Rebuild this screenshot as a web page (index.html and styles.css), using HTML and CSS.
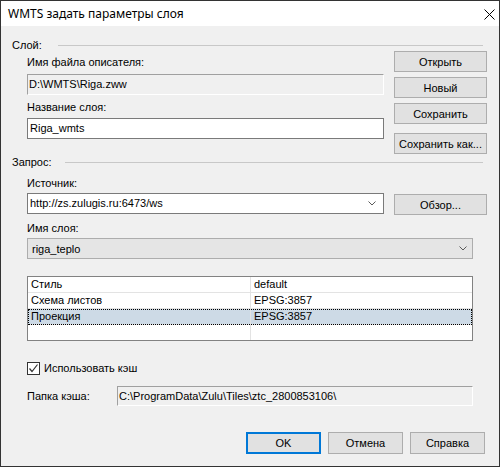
FILE: index.html
```html
<!DOCTYPE html>
<html lang="ru">
<head>
<meta charset="utf-8">
<title>WMTS задать параметры слоя</title>
<link rel="stylesheet" href="styles.css">
</head>
<body>
<div class="window">
  <div class="titlebar">
    <span class="title">WMTS задать параметры слоя</span>
    <svg class="close" viewBox="0 0 11 11" width="11" height="11"><path d="M0.5 0.5 L10.5 10.5 M10.5 0.5 L0.5 10.5" stroke="#000" stroke-width="1" fill="none"/></svg>
  </div>
  <div class="content">
    <div class="group-title"><span>Слой:</span><div class="rule"></div></div>
    <div class="row row-layer">
      <div class="col-left">
        <div class="label l-file">Имя файла описателя:</div>
        <div class="field static f-file">D:\WMTS\Riga.zww</div>
        <div class="label l-name">Название слоя:</div>
        <div class="field edit f-name">Riga_wmts</div>
      </div>
      <div class="col-right">
        <button class="btn">Открыть</button>
        <button class="btn b-gap">Новый</button>
        <button class="btn b-gap">Сохранить</button>
        <button class="btn b-saveas">Сохранить как...</button>
      </div>
    </div>
    <div class="group-title g-query"><span>Запрос:</span><div class="rule"></div></div>
    <div class="row row-source">
      <div class="col-left">
        <div class="label l-source">Источник:</div>
        <div class="field edit combo f-source"><span>http://zs.zulugis.ru:6473/ws</span><svg class="arrow" viewBox="0 0 8 5" width="8" height="5"><path d="M0.5 0.5 L4 4 L7.5 0.5" stroke="#5a5a5a" fill="none"/></svg></div>
      </div>
      <div class="col-right">
        <button class="btn b-browse">Обзор...</button>
      </div>
    </div>
    <div class="label l-layer">Имя слоя:</div>
    <div class="dropdown"><span>riga_teplo</span><svg class="arrow" viewBox="0 0 8 5" width="8" height="5"><path d="M0.5 0.5 L4 4 L7.5 0.5" stroke="#5a5a5a" fill="none"/></svg></div>
    <div class="props">
      <div class="prow"><div class="pcell pkey">Стиль</div><div class="pcell">default</div></div>
      <div class="prow"><div class="pcell pkey">Схема листов</div><div class="pcell">EPSG:3857</div></div>
      <div class="prow selected"><div class="pcell pkey">Проекция</div><div class="pcell">EPSG:3857</div></div>
      <div class="prow last"><div class="pcell pkey"></div><div class="pcell"></div></div>
    </div>
    <div class="check">
      <span class="box"><svg viewBox="0 0 11 11" width="11" height="11"><path d="M1.5 5.5 L4 8.5 L9.5 1.5" stroke="#333" stroke-width="1.2" fill="none"/></svg></span>
      <span class="check-text">Использовать кэш</span>
    </div>
    <div class="cache-row">
      <span class="cache-label">Папка кэша:</span>
      <div class="field static f-cache">C:\ProgramData\Zulu\Tiles\ztc_2800853106\</div>
    </div>
    <div class="footer">
      <button class="btn fbtn default">OK</button>
      <button class="btn fbtn">Отмена</button>
      <button class="btn fbtn">Справка</button>
    </div>
  </div>
</div>
</body>
</html>
```

FILE: styles.css
```css
* { box-sizing: border-box; }
html, body { margin: 0; padding: 0; background: #f0f0f0; }
body {
  font-family: "Liberation Sans", Arial, sans-serif;
  font-size: 11px;
  color: #000;
}
.window {
  width: 500px;
  height: 467px;
  border: 1px solid #333;
  background: #f0f0f0;
  display: flex;
  flex-direction: column;
}
.titlebar {
  height: 25px;
  flex: none;
  background: #fff;
  display: flex;
  align-items: center;
  justify-content: space-between;
  padding: 0 4px 0 7px;
}
.title {
  font-family: "Noto Sans", "Segoe UI", sans-serif;
  font-size: 12px;
}
.close { display: block; margin-top: 1px; }
.content { flex: 1; display: flex; flex-direction: column; }

.group-title {
  display: flex;
  align-items: center;
  height: 13px;
  line-height: 13px;
  margin: 13px 16px 0 11px;
}
.group-title .rule {
  flex: 1;
  border-top: 1px solid #c8c8c8;
  margin-left: 16px;
}
.g-query { margin-top: 2px; }
.g-query .rule { margin-left: 13px; }

.row { display: flex; margin-left: 26px; }
.row-layer { margin-top: -1px; }
.col-left { width: 357px; display: flex; flex-direction: column; }
.col-right { width: 93px; margin-left: 10px; display: flex; flex-direction: column; }

.label { line-height: 13px; height: 13px; }
.l-file { margin-top: 5px; }
.l-name { margin-top: 6px; }
.l-source { margin-top: 8px; }
.l-layer { margin: 7px 0 0 26px; }

.field {
  height: 21px;
  line-height: 19px;
  border: 1px solid #7a7a7a;
  padding: 0 2px;
  white-space: nowrap;
  overflow: hidden;
}
.field.edit { background: #fff; }
.field.static {
  background: #f0f0f0;
  border-color: #a0a0a0 #fff #fff #a0a0a0;
  padding-left: 1px;
}
.f-file { margin-top: 5px; }
.f-name { margin-top: 4px; }
.f-source { margin-top: 3px; }
.combo { display: flex; align-items: center; justify-content: space-between; padding-right: 7px; }
.arrow { display: block; }

.btn {
  font: inherit;
  color: #000;
  height: 21px;
  background: #e1e1e1;
  border: 1px solid #adadad;
  padding: 0;
  margin: 0;
  text-align: center;
  white-space: nowrap;
}
.b-gap { margin-top: 5px; }
.b-saveas { margin-top: 9px; }
.b-browse { margin-top: 25px; }

.dropdown {
  margin: 3px 0 0 26px;
  width: 446px;
  height: 21px;
  background: #e5e5e5;
  border: 1px solid #adadad;
  display: flex;
  align-items: center;
  justify-content: space-between;
  padding: 0 5px 0 4px;
}

.props {
  margin: 17px 0 0 26px;
  width: 446px;
  border: 1px solid #828282;
  background: #fff;
}
.prow {
  display: grid;
  grid-template-columns: 223px 1fr;
  height: 16px;
  border-bottom: 1px solid #e3e3e3;
}
.prow.last { height: 15px; border-bottom: none; }
.pcell { line-height: 15px; padding-left: 3px; }
.pkey { border-right: 1px solid #e3e3e3; }
.prow.selected {
  background: #cddae6;
  outline: 1px dotted #000;
  outline-offset: -1px;
}

.check {
  display: flex;
  align-items: center;
  margin: 21px 0 0 26px;
  height: 13px;
}
.box {
  width: 13px;
  height: 13px;
  border: 1px solid #333;
  background: #fff;
  display: flex;
  align-items: center;
  justify-content: center;
}
.box svg { display: block; }
.check-text { margin-left: 4px; line-height: 13px; }

.cache-row {
  display: flex;
  align-items: center;
  margin: 11px 0 0 26px;
}
.cache-label { width: 90px; }
.f-cache { width: 356px; height: 20px; line-height: 18px; }

.footer {
  display: flex;
  justify-content: flex-end;
  gap: 7px;
  margin: 26px 14px 0 0;
}
.fbtn { width: 75px; height: 22px; }
.fbtn.default { border-color: #0078d7; box-shadow: inset 0 0 0 1px #0078d7; }
```
